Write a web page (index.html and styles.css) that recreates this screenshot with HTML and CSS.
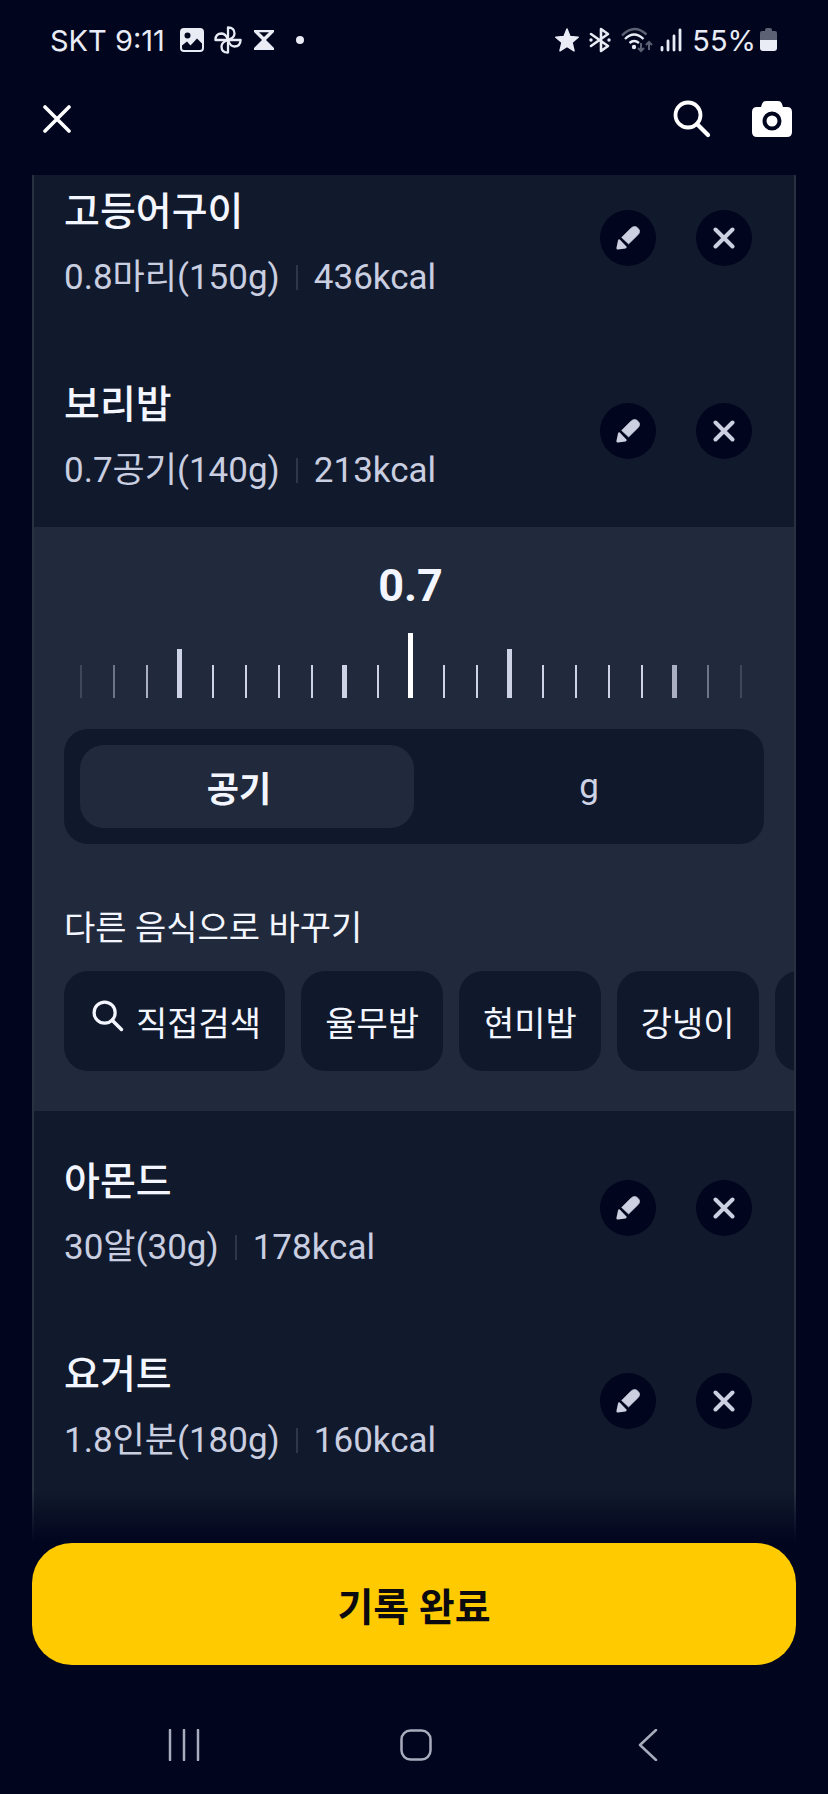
FILE: index.html
```html
<!DOCTYPE html>
<html lang="ko">
<head>
  <meta charset="utf-8" />
  <meta name="viewport" content="width=device-width, initial-scale=1" />
  <title>식단 기록</title>
  <link rel="stylesheet" href="styles.css">
</head>
<body>
  <svg class="sprite" aria-hidden="true">
    <symbol id="i-close" viewBox="0 0 28 28">
      <path d="M2 2L26 26M26 2L2 26" fill="none" stroke="currentColor" stroke-width="3.6" stroke-linecap="round" />
    </symbol>
    <symbol id="i-remove" viewBox="0 0 22 22">
      <path d="M2.5 2.5L19.5 19.5M19.5 2.5L2.5 19.5" fill="none" stroke="currentColor" stroke-width="4" stroke-linecap="round" />
    </symbol>
    <symbol id="i-search" viewBox="0 0 38 38">
      <circle cx="15" cy="15" r="12.5" fill="none" stroke="currentColor" stroke-width="3.8" />
      <path d="M24 24L35 35" fill="none" stroke="currentColor" stroke-width="4.2" stroke-linecap="round" />
    </symbol>
    <symbol id="i-edit" viewBox="0 0 24 24">
      <path d="M5.6 11.4L14.6 2.4Q16.8.2 19 .4Q20.6.6 22 2.2Q23.6 3.8 23.7 5.2Q23.8 7 21.8 9L12.6 18Z" fill="currentColor" stroke="currentColor" stroke-width=".6" stroke-linejoin="round" />
      <path d="M3.8 13.6L10.4 20.4Q11.2 21.8 9.6 22.4L2 23.6Q.4 23.8.4 22L2 14.4Q2.6 12.8 3.8 13.6Z" fill="currentColor" />
    </symbol>
  </svg>

  <div class="status">
    <div class="status-group">
      <span>SKT 9:11</span>
      <svg class="st-photo" width="24" height="24" viewBox="0 0 24 24">
        <path fill="currentColor" fill-rule="evenodd" d="M4 0H20Q24 0 24 4V20Q24 24 20 24H4Q0 24 0 20V4Q0 0 4 0ZM7.500 4.500A3 3 0 1 0 7.500 10.500A3 3 0 1 0 7.500 4.500ZM2 17.500V20Q2 22 4 22H20Q22 22 22 20V15.500L17 10.500L10.500 17.500L7 13.500Z" />
      </svg>
      <svg width="28" height="28" viewBox="0 0 28 28" fill="none" stroke="currentColor" stroke-width="2.300" stroke-linejoin="round">
        <path id="blade" d="M14 14V1.400Q20.500 1.600 20.500 7.600Q20.300 12 14 14Z" />
        <use href="#blade" transform="rotate(90 14 14)" />
        <use href="#blade" transform="rotate(180 14 14)" />
        <use href="#blade" transform="rotate(270 14 14)" />
      </svg>
      <svg class="st-hourglass" width="20" height="22" viewBox="0 0 20 22">
        <path fill="currentColor" fill-rule="evenodd" d="M0 1H20V3L12 11L20 19V21H0V19L8 11L0 3ZM5 3.200L10 8L15 3.200Z" />
      </svg>
      <i class="dot"></i>
    </div>
    <div class="status-group">
      <svg width="24" height="24" viewBox="0 0 24 24">
        <path fill="currentColor" stroke="currentColor" stroke-width="1.500" stroke-linejoin="round" d="M12 1L15 8.600L23.200 9.200L17 14.500L19 22.800L12 18.300L5 22.800L7 14.500L.8 9.200L9 8.600Z" />
      </svg>
      <svg class="st-bt" width="22" height="26" viewBox="0 0 22 26">
        <path d="M2 7L19 19L12 24V2L19 7L2 19" fill="none" stroke="currentColor" stroke-width="2.600" stroke-linejoin="round" stroke-linecap="round" />
        <circle cx="2" cy="13" r="1.700" fill="currentColor" />
        <circle cx="20" cy="13" r="1.700" fill="currentColor" />
      </svg>
      <svg width="32" height="26" viewBox="0 0 32 26" fill="none" stroke="currentColor" stroke-width="2.400">
        <path d="M1 8.500Q13-4 25.500 7.500" opacity=".4" />
        <path d="M4 12Q13 3 22.500 12M8.500 16Q13 12 18 16" />
        <circle cx="13" cy="20" r="2.200" fill="currentColor" stroke="none" />
        <path d="M20 16V24M17 21L20 24L23 21M28 23V15M25 18L28 15L31 18" opacity=".4" stroke-width="2" />
      </svg>
      <svg class="st-signal" width="22" height="24" viewBox="0 0 22 24" stroke="currentColor" stroke-width="2.800" stroke-linecap="round">
        <path d="M2 19.500V22M8 13V22M14 8V22M20 2V22" />
      </svg>
      <span>55%</span>
      <svg class="st-battery" width="17" height="24" viewBox="0 0 17 24">
        <path fill="currentColor" opacity=".4" d="M5 2Q5 0 7 0H10Q12 0 12 2V3H15Q17 3 17 5V12H0V5Q0 3 2 3H5Z" />
        <path fill="currentColor" d="M0 12H17V20Q17 23 14 23H3Q0 23 0 20Z" />
      </svg>
    </div>
  </div>

  <header class="topbar">
    <button class="icon-btn" aria-label="닫기"><svg width="28" height="28"><use href="#i-close" /></svg></button>
    <div class="topbar-right">
      <button class="icon-btn" aria-label="검색"><svg width="38" height="38"><use href="#i-search" /></svg></button>
      <button class="icon-btn" aria-label="카메라">
        <svg width="42" height="38" viewBox="0 0 42 38">
          <path fill="currentColor" fill-rule="evenodd" d="M15 1H27Q30 1 31 4L32 7H36Q41 7 41 12V32Q41 37 36 37H6Q1 37 1 32V12Q1 7 6 7H10L11 4Q12 1 15 1ZM21 11.500A9.500 9.500 0 1 0 21 30.500A9.500 9.500 0 1 0 21 11.500Z" />
          <circle cx="21" cy="21" r="5.500" fill="currentColor" />
        </svg>
      </button>
    </div>
  </header>

  <main class="list">
    <section class="food">
      <div class="food-info">
        <h2>고등어구이</h2>
        <p><span>0.8마리(150g)</span><i></i><span>436kcal</span></p>
      </div>
      <button class="round-btn" aria-label="수정"><svg width="24" height="24"><use href="#i-edit" /></svg></button>
      <button class="round-btn" aria-label="삭제"><svg width="22" height="22"><use href="#i-remove" /></svg></button>
    </section>

    <section class="food">
      <div class="food-info">
        <h2>보리밥</h2>
        <p><span>0.7공기(140g)</span><i></i><span>213kcal</span></p>
      </div>
      <button class="round-btn" aria-label="수정"><svg width="24" height="24"><use href="#i-edit" /></svg></button>
      <button class="round-btn" aria-label="삭제"><svg width="22" height="22"><use href="#i-remove" /></svg></button>
    </section>

    <section class="editor">
      <div class="dial">
        <output class="dial-value" for="amount">0.7</output>
        <div class="ruler">
          <i class="fade-3"></i><i class="fade-2"></i><i class="fade-1"></i><i class="major"></i><i></i><i></i><i></i>
          <i></i><i class="half"></i><i></i><i class="current"></i><i></i><i></i><i class="major"></i>
          <i></i><i></i><i></i><i></i><i class="half fade-1"></i><i class="fade-2"></i><i class="fade-3"></i>
          <input type="range" id="amount" min="0" max="1.4" step="0.1" value="0.7" aria-label="섭취량">
        </div>
      </div>

      <div class="segment">
        <button class="active">공기</button>
        <button>g</button>
      </div>

      <h3>다른 음식으로 바꾸기</h3>
      <div class="chips">
        <button class="chip chip-search"><svg width="32" height="32"><use href="#i-search" /></svg>직접검색</button>
        <button class="chip">율무밥</button>
        <button class="chip">현미밥</button>
        <button class="chip">강냉이</button>
        <button class="chip" aria-label="더보기"></button>
      </div>
    </section>

    <section class="food">
      <div class="food-info">
        <h2>아몬드</h2>
        <p><span>30알(30g)</span><i></i><span>178kcal</span></p>
      </div>
      <button class="round-btn" aria-label="수정"><svg width="24" height="24"><use href="#i-edit" /></svg></button>
      <button class="round-btn" aria-label="삭제"><svg width="22" height="22"><use href="#i-remove" /></svg></button>
    </section>

    <section class="food">
      <div class="food-info">
        <h2>요거트</h2>
        <p><span>1.8인분(180g)</span><i></i><span>160kcal</span></p>
      </div>
      <button class="round-btn" aria-label="수정"><svg width="24" height="24"><use href="#i-edit" /></svg></button>
      <button class="round-btn" aria-label="삭제"><svg width="22" height="22"><use href="#i-remove" /></svg></button>
    </section>
  </main>

  <footer class="footer">
    <button class="done">기록 완료</button>
  </footer>

  <nav class="navbar">
    <button aria-label="최근 앱">
      <svg width="32" height="32" viewBox="0 0 32 32"><path d="M2 1V31M16 1V31M30 1V31" /></svg>
    </button>
    <button aria-label="홈">
      <svg width="32" height="32" viewBox="0 0 32 32"><rect x="1.500" y="1.500" width="29" height="29" rx="9" /></svg>
    </button>
    <button aria-label="뒤로">
      <svg width="32" height="32" viewBox="0 0 32 32"><path d="M24 1L8 16L24 31" /></svg>
    </button>
  </nav>
</body>
</html>
```
FILE: styles.css
```css
* {
  box-sizing: border-box;
}

body {
  font-family: Roboto, "Noto Sans CJK KR", sans-serif;
  background: #01051e;
  color: #f4f6ff;
  margin: 0;
  min-height: 100vh;
  display: flex;
  flex-direction: column;
}

button {
  font: inherit;
  color: inherit;
  background: none;
  border: none;
  padding: 0;
  cursor: pointer;
}

svg {
  display: block;
  flex: none;
}

h2, h3, p {
  margin: 0;
  font-weight: normal;
}

.sprite {
  position: absolute;
  width: 0;
  height: 0;
}

/* status bar */
.status {
  display: flex;
  justify-content: space-between;
  height: 80px;
  padding: 0 51px 0 50px;
  font-family: Inter, sans-serif;
  font-size: 29px;
  color: #e9ebf5;
}

.status-group {
  display: flex;
  align-items: center;
  gap: 10px;
}

.st-photo {
  margin-left: 5px;
}

.st-hourglass {
  margin-left: 2px;
}

.dot {
  width: 8px;
  height: 8px;
  margin-left: 12px;
  border-radius: 50%;
  background: currentColor;
}

.st-signal {
  margin-left: -3px;
}

.st-battery {
  margin-left: -6px;
}

/* top bar */
.topbar {
  display: flex;
  justify-content: space-between;
  align-items: center;
  height: 95px;
  padding: 0 35px 18px 43px;
  color: #fff;
}

.topbar-right {
  display: flex;
  align-items: center;
  gap: 40px;
}

/* food list */
.list {
  flex: 1;
  margin: 0 32px;
  padding-bottom: 46px;
  overflow: hidden;
  background: #111a2c;
  border: solid rgba(255, 255, 255, 0.1);
  border-width: 0 2px;
}

.food {
  display: flex;
  align-items: center;
  gap: 40px;
  height: 193px;
  padding: 0 42px 0 30px;
}

.food:first-child {
  margin-top: -34px;
}

.food-info {
  flex: 1;
  padding-top: 16px;
}

.food-info h2 {
  font-size: 39px;
  font-weight: 500;
  line-height: 64px;
}

.food-info p {
  display: flex;
  align-items: center;
  font-size: 35px;
  line-height: 68px;
  color: #c9cee0;
}

.food-info i {
  width: 2px;
  height: 25px;
  margin: 0 16px;
  background: #2d364a;
}

.round-btn {
  display: flex;
  align-items: center;
  justify-content: center;
  width: 56px;
  height: 56px;
  border-radius: 50%;
  background: #01051e;
  color: #cdd0e0;
}

/* amount editor */
.editor {
  padding: 33px 0 40px 30px;
  background: #202a3c;
}

.dial {
  margin-right: 37px;
}

.dial-value {
  display: block;
  text-align: center;
  font-size: 45px;
  font-weight: bold;
  line-height: 52px;
}

.ruler {
  position: relative;
  display: grid;
  grid-template-columns: repeat(21, 1fr);
  align-items: end;
  justify-items: center;
  height: 65px;
  margin: 21px 0 31px;
}

.ruler i {
  width: 2px;
  height: 33px;
  background: #cdd2e4;
}

.ruler .half {
  width: 5px;
}

.ruler .major {
  width: 5px;
  height: 49px;
}

.ruler .current {
  width: 5px;
  height: 65px;
  background: #fff;
}

.ruler .fade-1 {
  opacity: 0.8;
}

.ruler .fade-2 {
  opacity: 0.45;
}

.ruler .fade-3 {
  opacity: 0.18;
}

.ruler input {
  position: absolute;
  inset: 0;
  width: 100%;
  margin: 0;
  opacity: 0;
}

.segment {
  display: flex;
  height: 115px;
  margin-right: 30px;
  border-radius: 24px;
  background: #10192b;
}

.segment button {
  position: relative;
  flex: 1;
  font-size: 35px;
  color: #cdd2e4;
}

.segment .active {
  z-index: 0;
  font-weight: bold;
  color: #f4f6ff;
}

.segment .active::before {
  content: "";
  position: absolute;
  inset: 16px 0 16px 16px;
  z-index: -1;
  border-radius: 24px;
  background: #202a3c;
}

.editor h3 {
  margin: 60px 0 19px;
  font-size: 34px;
  line-height: 48px;
}

.chips {
  display: flex;
  gap: 16px;
  overflow: hidden;
}

.chip {
  display: flex;
  flex: none;
  align-items: center;
  height: 100px;
  min-width: 100px;
  padding: 0 24px;
  border-radius: 24px;
  background: #10192b;
  font-size: 34px;
}

.chip-search {
  gap: 12px;
  padding-left: 28px;
}

.chip-search svg {
  margin-bottom: 10px;
}

/* bottom button */
.footer {
  position: relative;
  padding: 0 32px;
}

.footer::before {
  content: "";
  position: absolute;
  left: 0;
  right: 0;
  bottom: 100%;
  height: 54px;
  background: linear-gradient(transparent, #01051e);
}

.done {
  display: block;
  width: 100%;
  height: 122px;
  border-radius: 40px;
  background: #ffcb00;
  color: #0b0a10;
  font-size: 39px;
  font-weight: bold;
}

/* system navigation */
.navbar {
  display: flex;
  justify-content: space-around;
  height: 129px;
  padding: 32px 64px 0 68px;
}

.navbar button {
  display: flex;
  align-items: center;
  justify-content: center;
  width: 96px;
  height: 96px;
}

.navbar svg {
  fill: none;
  stroke: #a9acbc;
  stroke-width: 2.5;
  stroke-linecap: round;
  stroke-linejoin: round;
}
```
